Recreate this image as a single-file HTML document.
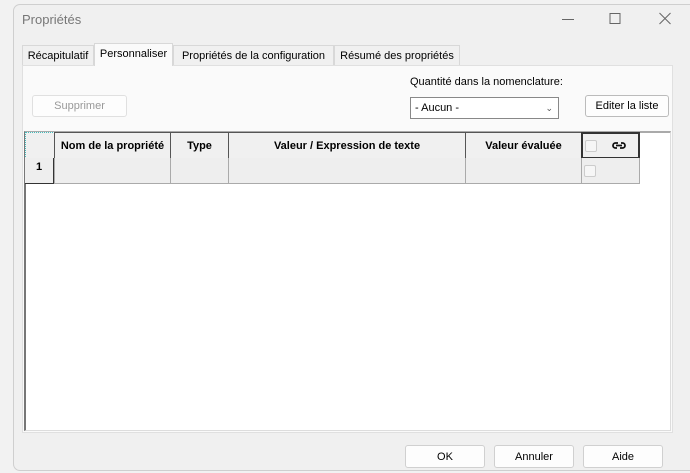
<!DOCTYPE html><html><head><meta charset="utf-8"><style>
body{margin:0;width:690px;height:473px;background:#f2f2f2;font-family:"Liberation Sans",sans-serif;font-size:11px;color:#000;position:relative;overflow:hidden}
.a{position:absolute;box-sizing:border-box}
.btn{position:absolute;box-sizing:border-box;border:1px solid #d0d0d0;border-radius:3px;background:#fdfdfd;text-align:center;font-size:11px}
.th{position:absolute;box-sizing:border-box;border:1px solid #555;background:#f0f0f0;font-weight:bold;text-align:center;height:27px;line-height:26px;top:132px;font-size:11px}
.td{position:absolute;box-sizing:border-box;border:1px solid #aaa;border-top:none;background:#eeeeee;height:26px;top:158px}
.cb{position:absolute;width:10px;height:10px;border:1px solid #ccc;border-radius:2px;background:#f6f6f6}
</style></head><body>
<div class="a" style="left:13px;top:4px;width:700px;height:467px;background:#f0f0f0;border:1px solid #cfcfcf;border-radius:7px"></div>
<div class="a" style="left:22px;top:12px;font-size:13px;color:#777">Propriétés</div>
<svg class="a" style="left:555px;top:8px" width="125" height="24"><path d="M7 11.5H19M55 5.5h10v10H55zM104.5 5l11 11M115.5 5l-11 11" fill="none" stroke="#666" stroke-width="1"/></svg>
<!-- tabs -->
<div class="a" style="left:22px;top:45px;width:72px;height:20px;border:1px solid #d8d8d8;border-bottom:none;background:#f0f0f0;line-height:20px;text-align:center">Récapitulatif</div>
<div class="a" style="left:94px;top:43px;width:79px;height:23px;border:1px solid #d8d8d8;border-bottom:none;background:#fafafa;line-height:20px;text-align:center;z-index:2">Personnaliser</div>
<div class="a" style="left:173px;top:45px;width:161px;height:20px;border:1px solid #d8d8d8;border-bottom:none;background:#f0f0f0;line-height:20px;text-align:center">Propriétés de la configuration</div>
<div class="a" style="left:334px;top:45px;width:126px;height:20px;border:1px solid #d8d8d8;border-bottom:none;background:#f0f0f0;line-height:20px;text-align:center">Résumé des propriétés</div>
<div class="a" style="left:22px;top:65px;width:651px;height:368px;background:#fafafa;border:1px solid #e0e0e0"></div>
<div class="btn" style="left:32px;top:95px;width:95px;height:22px;line-height:21px;color:#999;border-color:#e0e0e0">Supprimer</div>
<div class="a" style="left:410px;top:76px">Quantité dans la nomenclature:</div>
<div class="a" style="left:410px;top:97px;width:149px;height:22px;border:1px solid #888;background:#fff;line-height:21px;padding-left:4px">- Aucun -<span style="position:absolute;right:5px;top:0;color:#555;font-size:9px">&#8964;</span></div>
<div class="btn" style="left:585px;top:95px;width:84px;height:22px;line-height:21px;border-color:#bbb">Editer la liste</div>
<!-- grid -->
<div class="a" style="left:24px;top:131px;width:647px;height:300px;background:#fff;border-left:2px solid #777;border-top:2px solid #aaa;border-right:1px solid #ddd;border-bottom:1px solid #ddd"></div>
<div class="th" style="left:25px;width:30px;border-color:#aaa;border-top:1px dotted #4bb;border-left:1px dotted #4bb;border-right:1px solid #c44"></div>
<div class="th" style="left:54px;width:117px">Nom de la propriété</div>
<div class="th" style="left:170px;width:59px">Type</div>
<div class="th" style="left:228px;width:238px">Valeur / Expression de texte</div>
<div class="th" style="left:465px;width:117px">Valeur évaluée</div>
<div class="th" style="left:581px;width:59px;border:2px solid #333"></div>
<div class="cb" style="left:585px;top:140px"></div>
<svg class="a" style="left:611px;top:140px" width="16" height="11" viewBox="0 0 16 11"><path d="M7 3H4.5a2.5 2.5 0 0 0 0 5H6M9 8h2.5a2.5 2.5 0 0 0 0-5H10M5 5.5h6" fill="none" stroke="#111" stroke-width="1.8"/></svg>
<div class="td" style="left:25px;width:30px;border-right:2px solid #333;border-color:#333;border-left:none;font-weight:bold;padding:3px 0 0 11px">1</div>
<div class="td" style="left:54px;width:117px"></div>
<div class="td" style="left:170px;width:59px"></div>
<div class="td" style="left:228px;width:238px"></div>
<div class="td" style="left:465px;width:117px"></div>
<div class="td" style="left:581px;width:59px"></div>
<div class="cb" style="left:584px;top:165px"></div>
<!-- bottom -->
<div class="btn" style="left:405px;top:445px;width:80px;height:23px;line-height:23px">OK</div>
<div class="btn" style="left:494px;top:445px;width:80px;height:23px;line-height:23px">Annuler</div>
<div class="btn" style="left:583px;top:445px;width:80px;height:23px;line-height:23px">Aide</div>
</body></html>
